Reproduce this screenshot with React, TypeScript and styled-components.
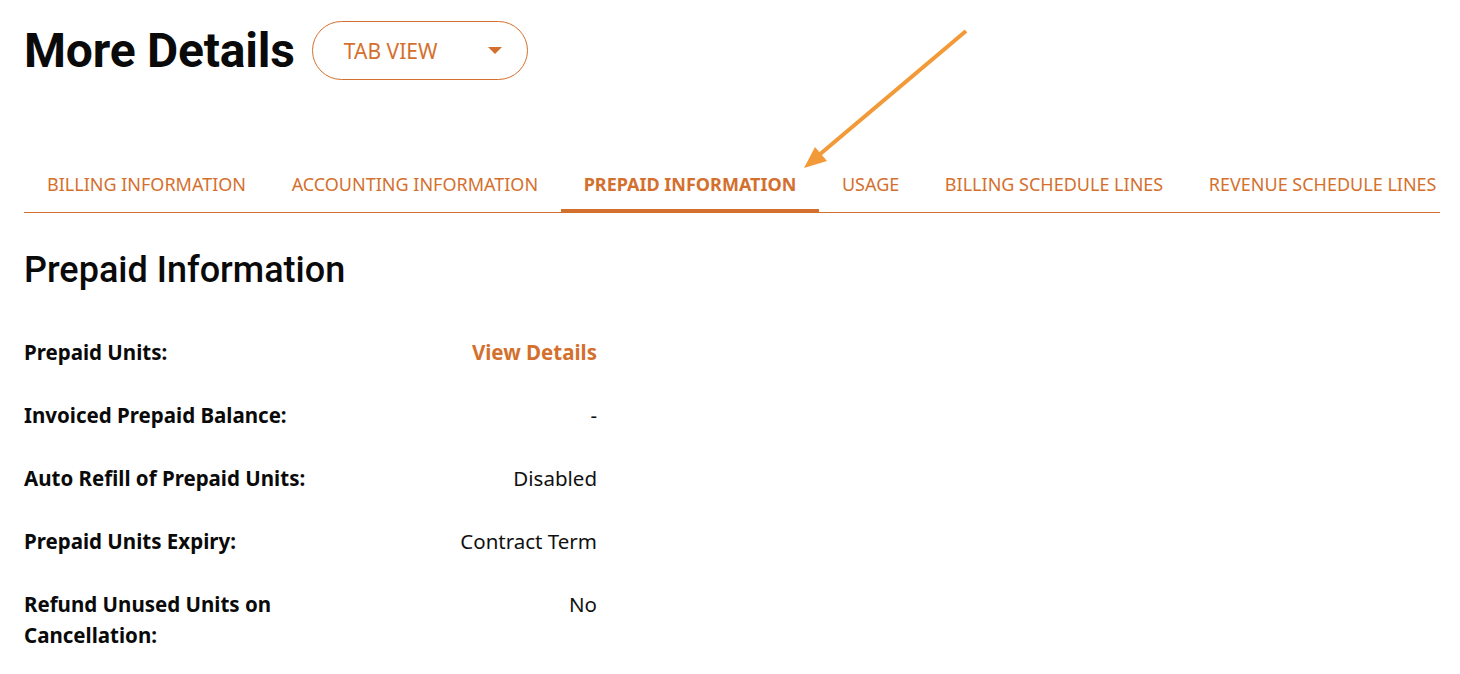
import styled, { createGlobalStyle } from "styled-components";

const ORANGE = "#d4702e";

const tabs = [
  "BILLING INFORMATION",
  "ACCOUNTING INFORMATION",
  "PREPAID INFORMATION",
  "USAGE",
  "BILLING SCHEDULE LINES",
  "REVENUE SCHEDULE LINES",
];

const rows = [
  { label: "Prepaid Units:", value: "View Details", link: true },
  { label: "Invoiced Prepaid Balance:", value: "-" },
  { label: "Auto Refill of Prepaid Units:", value: "Disabled" },
  { label: "Prepaid Units Expiry:", value: "Contract Term" },
  { label: "Refund Unused Units on Cancellation:", value: "No" },
];

const App = () => {
  return (
    <Page>
      <GlobalStyle />
      <Header>
        <Title>More Details</Title>
        <Dropdown type="button">
          TAB VIEW
          <Caret />
        </Dropdown>
      </Header>

      <Tabs>
        {tabs.map((t) => (
          <Tab key={t} $active={t === "PREPAID INFORMATION"}>
            {t}
          </Tab>
        ))}
      </Tabs>

      <SectionTitle>Prepaid Information</SectionTitle>

      <Fields>
        {rows.map((r) => (
          <Row key={r.label}>
            <Label>{r.label}</Label>
            <Value $link={r.link}>{r.value}</Value>
          </Row>
        ))}
      </Fields>

      <Arrow width="1460" height="674" viewBox="0 0 1460 674">
        <line x1="966" y1="31" x2="819" y2="155" stroke="#f29a38" strokeWidth="4" />
        <polygon points="804,168 827,161 815,147" fill="#f29a38" />
      </Arrow>
    </Page>
  );
};

/** Styles */
const GlobalStyle = createGlobalStyle`
  body {
    margin: 0;
    background: #fff;
    font-family: "Noto Sans", "Open Sans", sans-serif;
    color: #111;
  }
`;

const Page = styled.div`
  position: relative;
  width: 1460px;
  height: 674px;
  padding: 21px 20px 0 24px;
  box-sizing: border-box;
  overflow: hidden;
`;

const Header = styled.div`
  display: flex;
  align-items: center;
  gap: 17px;
`;

const Title = styled.h1`
  margin: 0;
  font-family: Roboto, sans-serif;
  font-weight: 700;
  font-size: 48px;
  line-height: 59px;
  color: #0a0a0a;
  letter-spacing: -0.2px;
`;

const Dropdown = styled.button`
  display: flex;
  align-items: center;
  justify-content: space-between;
  width: 216px;
  height: 59px;
  padding: 0 25px 0 31px;
  box-sizing: border-box;
  border: 1px solid ${ORANGE};
  border-radius: 30px;
  background: #fff;
  color: ${ORANGE};
  font-family: "Noto Sans", sans-serif;
  font-size: 21px;
  cursor: pointer;
`;

const Caret = styled.span`
  width: 0;
  height: 0;
  border-left: 7.5px solid transparent;
  border-right: 7.5px solid transparent;
  border-top: 7px solid ${ORANGE};
`;

const Tabs = styled.div`
  display: flex;
  margin-top: 92px;
  border-bottom: 1px solid ${ORANGE};
`;

const Tab = styled.div<{ $active?: boolean }>`
  padding: 0 23px 13px;
  margin-right: -0.4px;
  margin-bottom: -1px;
  font-size: 18px;
  line-height: 24px;
  color: ${ORANGE};
  font-weight: ${(p) => (p.$active ? 700 : 400)};
  border-bottom: 4px solid ${(p) => (p.$active ? ORANGE : "transparent")};
  white-space: nowrap;
`;

const SectionTitle = styled.h2`
  margin: 37px 0 0;
  font-family: Roboto, sans-serif;
  font-weight: 500;
  font-size: 36px;
  line-height: 40px;
  color: #0a0a0a;
`;

const Fields = styled.div`
  display: flex;
  flex-direction: column;
  gap: 32px;
  width: 573px;
  margin-top: 47px;
`;

const Row = styled.div`
  display: grid;
  grid-template-columns: 310px 1fr;
  font-size: 20.5px;
  line-height: 31px;
`;

const Label = styled.div`
  font-weight: 700;
  color: #0a0a0a;
`;

const Value = styled.div<{ $link?: boolean }>`
  text-align: right;
  color: ${(p) => (p.$link ? ORANGE : "#111")};
  font-weight: ${(p) => (p.$link ? 700 : 400)};
`;

const Arrow = styled.svg`
  position: absolute;
  top: 0;
  left: 0;
  pointer-events: none;
`;

/** Exports */
export default App;
